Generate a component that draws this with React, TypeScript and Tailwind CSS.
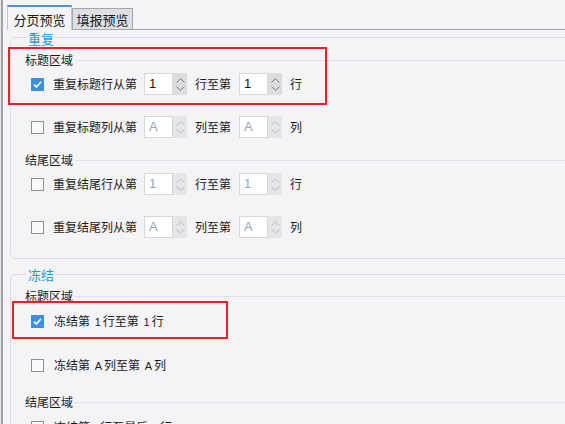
const FONT = "font-['Microsoft_YaHei','Noto_Sans_CJK_SC',sans-serif]";

function Check({ checked }: { checked: boolean }) {
  if (checked) {
    return (
      <span className="flex h-[13px] w-[13px] shrink-0 items-center justify-center bg-[#3c8fe6]">
        <svg width="11" height="11" viewBox="0 0 11 11" fill="none">
          <path d="M2 5.6 L4.4 8 L9 2.8" stroke="white" strokeWidth="1.6" />
        </svg>
      </span>
    );
  }
  return <span className="h-[13px] w-[13px] shrink-0 border border-[#8f8f94] bg-[#fafafa]" />;
}

function Spinner({ value, disabled }: { value: string; disabled?: boolean }) {
  return (
    <div className="flex h-[22px] w-[43px] shrink-0">
      <div
        className={`flex w-[29px] items-center border border-[#d7d7dc] pl-[4px] text-[13px] ${
          disabled ? "bg-white text-[#98a2b8]" : "bg-white text-[#111]"
        } font-['Liberation_Sans',sans-serif]`}
      >
        {value}
      </div>
      <div
        className={`flex w-[14px] flex-col items-center justify-center gap-[3px] ${
          disabled ? "bg-[#e6e6e9]" : "bg-[#dcdcdf]"
        }`}
      >
        <svg width="9" height="5" viewBox="0 0 9 5" fill="none">
          <path d="M0.5 4.5 L4.5 0.8 L8.5 4.5" stroke={disabled ? "#b8b8bc" : "#7c7c80"} strokeWidth="1" />
        </svg>
        <svg width="9" height="5" viewBox="0 0 9 5" fill="none">
          <path d="M0.5 0.5 L4.5 4.2 L8.5 0.5" stroke={disabled ? "#b8b8bc" : "#7c7c80"} strokeWidth="1" />
        </svg>
      </div>
    </div>
  );
}

function RangeRow({
  checked,
  label,
  mid,
  end,
  a,
  b,
  disabled,
  className,
}: {
  checked: boolean;
  label: string;
  mid: string;
  end: string;
  a: string;
  b: string;
  disabled?: boolean;
  className: string;
}) {
  return (
    <div className={`flex h-[22px] shrink-0 items-center pl-[6px] ${className}`}>
      <Check checked={checked} />
      <span className="ml-[9px] w-[84px] whitespace-nowrap">{label}</span>
      <span className="ml-[7px]">
        <Spinner value={a} disabled={disabled} />
      </span>
      <span className="ml-[8px] whitespace-nowrap">{mid}</span>
      <span className="ml-[8px]">
        <Spinner value={b} disabled={disabled} />
      </span>
      <span className="ml-[8px]">{end}</span>
    </div>
  );
}

function SimpleRow({ checked, children, className }: { checked: boolean; children: React.ReactNode; className: string }) {
  return (
    <div className={`flex h-[22px] shrink-0 items-center pl-[6px] ${className}`}>
      <Check checked={checked} />
      <span className="ml-[10px] whitespace-nowrap">{children}</span>
    </div>
  );
}

function Title({ text, className }: { text: string; className: string }) {
  return (
    <div className={`flex h-[16px] shrink-0 items-center ${className}`}>
      <span className="whitespace-nowrap leading-[16px]">{text}</span>
      <span className="ml-[2px] h-px flex-1 bg-[#e2e2e6]" />
    </div>
  );
}

function Num({ v }: { v: string }) {
  return <span className="mx-[2px] font-['Liberation_Sans',sans-serif] text-[11px]">{v}</span>;
}

export default function App() {
  return (
    <div className={`relative flex h-[424px] w-[565px] overflow-hidden bg-[#f4f4f6] text-[12px] text-[#1a1a1a] ${FONT}`}>
      {/* left splitter */}
      <div className="flex w-[3px] shrink-0">
        <div className="w-px bg-[#e4e4e4]" />
        <div className="w-[2px] bg-[#a2a2a6]" />
      </div>

      <div className="flex w-[640px] shrink-0 flex-col">
        {/* tabs */}
        <div className="flex h-[30px] shrink-0 items-end">
          <div className="w-[4px] self-stretch" />
          <div className="flex h-[25px] w-[65px] items-center justify-center border-x border-t-2 border-x-[#c6c6cc] border-t-[#4a94dc] bg-[#f4f4f6] pt-[2px] text-[13px] leading-none">
            分页预览
          </div>
          <div className="flex h-[22px] w-[61px] items-center justify-center border border-[#a4a6ae] bg-[#dfdfe3] pt-[1px] text-[13px] leading-none">
            填报预览
          </div>
          <div className="h-full flex-1 border-b border-[#9aa1ad]" />
        </div>

        <div className="flex shrink-0 flex-col pl-[7px]">
          {/* 重复 */}
          <fieldset className="w-[620px] shrink-0 rounded-[5px] border border-[#dedee2] pb-[20px] pl-[14px]">
            <legend className="ml-[2px] px-[1px] text-[13px] leading-[14px] text-[#1b9be2]">
              <span className="relative top-[2px]">重复</span>
            </legend>
            <Title text="标题区域" className="mt-[8px]" />
            <RangeRow className="mt-[5px]" checked label="重复标题行从第" mid="行至第" end="行" a="1" b="1" />
            <RangeRow className="mt-[21px]" checked={false} label="重复标题列从第" mid="列至第" end="列" a="A" b="A" disabled />
            <Title text="结尾区域" className="mt-[14px]" />
            <RangeRow className="mt-[5px]" checked={false} label="重复结尾行从第" mid="行至第" end="行" a="1" b="1" disabled />
            <RangeRow className="mt-[21px]" checked={false} label="重复结尾列从第" mid="列至第" end="列" a="A" b="A" disabled />
          </fieldset>

          {/* 冻结 */}
          <fieldset className="mt-[8px] w-[620px] shrink-0 rounded-[5px] border border-[#dedee2] pb-[20px] pl-[14px]">
            <legend className="ml-[2px] px-[1px] text-[13px] leading-[14px] text-[#1b9be2]">
              <span className="relative top-[1px]">冻结</span>
            </legend>
            <Title text="标题区域" className="mt-[7px]" />
            <SimpleRow className="mt-[6px]" checked>
              冻结第 <Num v="1" />行至第 <Num v="1" />行
            </SimpleRow>
            <SimpleRow className="mt-[22px]" checked={false}>
              冻结第 <Num v="A" />列至第 <Num v="A" />列
            </SimpleRow>
            <Title text="结尾区域" className="mt-[18px]" />
            <SimpleRow className="mt-[6px]" checked={false}>
              冻结第<Num v="1" />行至最后一行
            </SimpleRow>
          </fieldset>
        </div>
      </div>

      {/* annotation boxes */}
      <div className="pointer-events-none absolute left-[8px] top-[47px] h-[58px] w-[319px] border-2 border-[#e8202a]" />
      <div className="pointer-events-none absolute left-[12px] top-[301px] h-[38px] w-[216px] border-2 border-[#e8202a]" />
    </div>
  );
}
